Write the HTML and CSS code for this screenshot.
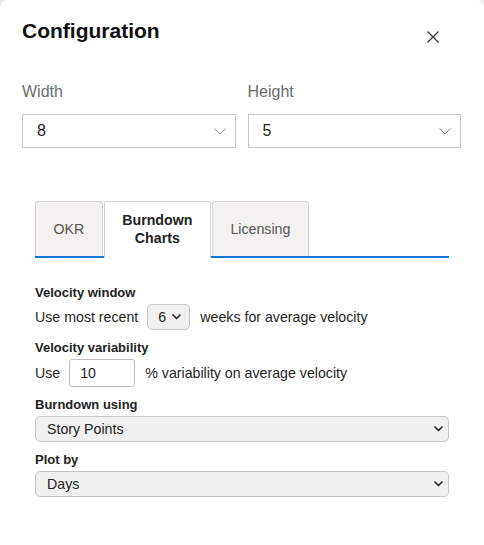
FILE: index.html
```html
<!DOCTYPE html>
<html lang="en">
<head>
<meta charset="utf-8">
<title>Configuration</title>
<link rel="stylesheet" href="styles.css">
</head>
<body>
<div class="dialog">
  <div class="header">
    <h1 class="title">Configuration</h1>
    <button class="close" aria-label="Close">
      <svg width="12" height="12" viewBox="0 0 12 12"><path d="M0.5 0.5 L11.5 11.5 M11.5 0.5 L0.5 11.5" stroke="#323130" stroke-width="1.1" fill="none"/></svg>
    </button>
  </div>

  <div class="size-grid">
    <div class="size-field">
      <div class="size-label">Width</div>
      <div class="fluent-select">
        <span>8</span>
        <svg width="12" height="7" viewBox="0 0 12 7"><path d="M0.5 0.5 L6 6 L11.5 0.5" stroke="#8a8886" stroke-width="1" fill="none"/></svg>
      </div>
    </div>
    <div class="size-field">
      <div class="size-label">Height</div>
      <div class="fluent-select">
        <span>5</span>
        <svg width="12" height="7" viewBox="0 0 12 7"><path d="M0.5 0.5 L6 6 L11.5 0.5" stroke="#8a8886" stroke-width="1" fill="none"/></svg>
      </div>
    </div>
  </div>

  <div class="tabs-panel">
    <div class="tab-bar">
      <div class="tab">OKR</div>
      <div class="tab active">Burndown<br>Charts</div>
      <div class="tab">Licensing</div>
    </div>

    <div class="form">
      <div class="field">
        <div class="field-label">Velocity window</div>
        <div class="row">
          <span>Use most recent</span>
          <div class="mac-select small">
            <span>6</span>
            <svg width="9" height="6" viewBox="0 0 9 6"><path d="M1 1 L4.5 4.5 L8 1" stroke="#2b2b2b" stroke-width="1.7" fill="none" stroke-linecap="round" stroke-linejoin="round"/></svg>
          </div>
          <span>weeks for average velocity</span>
        </div>
      </div>

      <div class="field">
        <div class="field-label">Velocity variability</div>
        <div class="row">
          <span>Use</span>
          <input class="num-input" type="text" value="10">
          <span>% variability on average velocity</span>
        </div>
      </div>

      <div class="field">
        <div class="field-label">Burndown using</div>
        <div class="mac-select full">
          <span>Story Points</span>
          <svg width="9" height="6" viewBox="0 0 9 6"><path d="M1 1 L4.5 4.5 L8 1" stroke="#2b2b2b" stroke-width="1.7" fill="none" stroke-linecap="round" stroke-linejoin="round"/></svg>
        </div>
      </div>

      <div class="field">
        <div class="field-label">Plot by</div>
        <div class="mac-select full">
          <span>Days</span>
          <svg width="9" height="6" viewBox="0 0 9 6"><path d="M1 1 L4.5 4.5 L8 1" stroke="#2b2b2b" stroke-width="1.7" fill="none" stroke-linecap="round" stroke-linejoin="round"/></svg>
        </div>
      </div>
    </div>
  </div>
</div>
</body>
</html>
```

FILE: styles.css
```css
html, body {
  margin: 0;
  padding: 0;
}

body {
  background: #e9e9e9;
  font-family: "Liberation Sans", Arial, sans-serif;
  color: #1f1f1f;
}

.dialog {
  background: #ffffff;
  border-radius: 7px 7px 0 0;
  height: 545px;
  box-sizing: border-box;
  padding: 17px 23px 0 22px;
  overflow: hidden;
}

.header {
  display: flex;
  justify-content: space-between;
  align-items: flex-start;
}

.title {
  margin: 0;
  font-size: 21px;
  line-height: 27px;
  font-weight: 700;
  color: #111;
}

.close {
  width: 32px;
  height: 32px;
  margin: 4px 12px 0 0;
  padding: 0;
  border: none;
  background: transparent;
  display: flex;
  align-items: center;
  justify-content: center;
}

.size-grid {
  display: grid;
  grid-template-columns: 1fr 1fr;
  column-gap: 12px;
  margin-top: 29px;
}

.size-label {
  font-size: 16px;
  line-height: 20px;
  color: #6b6b6b;
  margin-bottom: 12px;
}

.fluent-select {
  height: 34px;
  box-sizing: border-box;
  border: 1px solid #c8c8c8;
  display: flex;
  align-items: center;
  justify-content: space-between;
  padding: 0 9px 0 14px;
  font-size: 16px;
  color: #222;
}

.tabs-panel {
  margin: 53px 12px 0 13px;
}

.tab-bar {
  display: flex;
  gap: 1px;
  border-bottom: 2px solid #0f78d4;
}

.tab {
  display: flex;
  align-items: center;
  justify-content: center;
  text-align: center;
  box-sizing: border-box;
  padding: 9px 17.5px;
  border: 1px solid #d2d2d2;
  border-bottom: none;
  border-radius: 3px 3px 0 0;
  background: #f3f2f1;
  font-size: 14.2px;
  line-height: 18px;
  color: #555;
}

.tab.active {
  background: #ffffff;
  font-weight: 700;
  color: #222;
  padding-bottom: 11px;
  margin-bottom: -2px;
}

.form {
  margin-top: 27px;
}

.field {
  margin-bottom: 10px;
}

.field-label {
  font-size: 13px;
  line-height: 16px;
  font-weight: 700;
  color: #222;
  margin-bottom: 3px;
}

.row {
  display: flex;
  align-items: center;
  gap: 9px;
  font-size: 14.2px;
  color: #1f1f1f;
}

.mac-select {
  display: flex;
  align-items: center;
  justify-content: space-between;
  box-sizing: border-box;
  height: 26px;
  border: 1px solid #c6c6c6;
  border-radius: 5px;
  background: #f0f0f0;
  font-size: 14.2px;
  color: #222;
}

.mac-select.small {
  width: 43px;
  padding: 0 8px 0 10px;
  margin-right: 1px;
}

.mac-select.full {
  width: 100%;
  padding: 0 5px 0 11px;
}

.num-input {
  width: 66px;
  height: 28px;
  box-sizing: border-box;
  border: 1px solid #bdbdbd;
  border-radius: 3px;
  padding: 0 0 0 10px;
  margin: 0 1px 0 0;
  font-family: "Liberation Sans", Arial, sans-serif;
  font-size: 14.2px;
  color: #1f1f1f;
  background: #fff;
}
```
